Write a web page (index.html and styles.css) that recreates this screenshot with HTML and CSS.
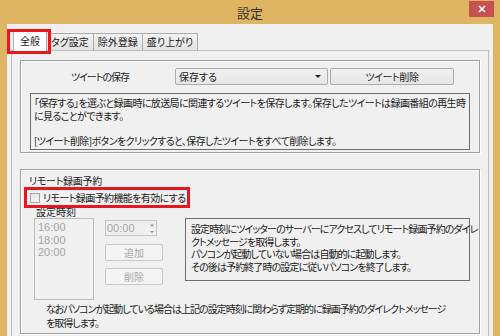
FILE: index.html
```html
<!DOCTYPE html>
<html lang="ja">
<head>
    <meta charset="UTF-8">
    <title>設定</title>
    <link rel="stylesheet" href="styles.css">
</head>
<body>
<div class="titlebar">
    <span class="title">設定</span>
    <span class="close">
        <svg width="8" height="8" viewBox="0 0 8 8"><path d="M1 1L7 7M7 1L1 7" stroke="#fff" stroke-width="1.6"/></svg>
    </span>
</div>
<div class="client">
    <nav class="tabs">
        <a href="javascript:;" class="tab active">全般<span class="mark"></span></a>
        <a href="javascript:;" class="tab">タグ設定</a>
        <a href="javascript:;" class="tab">除外登録</a>
        <a href="javascript:;" class="tab">盛り上がり</a>
    </nav>
    <div class="page">
        <div class="group save">
            <div class="row">
                <span class="lbl">ツイートの保存</span>
                <div class="combo">保存する<span class="arrow"></span></div>
                <span class="btn del">ツイート削除</span>
            </div>
            <div class="memo">
                「保存する」を選ぶと録画時に放送局に関連するツイートを保存します。保存したツイートは録画番組の再生時<br>
                に見ることができます。<br>
                <br>
                [ツイート削除]ボタンをクリックすると、保存したツイートをすべて削除します。
            </div>
        </div>
        <div class="group remote">
            <div class="cap">リモート録画予約</div>
            <label class="check"><span class="box"></span>リモート録画予約機能を有効にする<span class="mark"></span></label>
            <div class="sched">
                <div class="times">
                    <div class="sub">設定時刻</div>
                    <div class="list">
                        <div>16:00</div>
                        <div>18:00</div>
                        <div>20:00</div>
                    </div>
                </div>
                <div class="ctrls">
                    <div class="spin">00:00<span class="spinbtn"><i class="up"></i><i class="down"></i></span></div>
                    <span class="btn off add">追加</span>
                    <span class="btn off">削除</span>
                </div>
                <div class="desc">
                    設定時刻にツイッターのサーバーにアクセスしてリモート録画予約のダイレ<br>
                    クトメッセージを取得します。<br>
                    パソコンが起動していない場合は自動的に起動します。<br>
                    その後は予約終了時の設定に従いパソコンを終了します。
                </div>
            </div>
            <p class="note">
                なおパソコンが起動している場合は上記の設定時刻に関わらず定期的に録画予約のダイレクトメッセージ<br>
                を取得します。
            </p>
        </div>
    </div>
</div>
</body>
</html>
```

FILE: styles.css
```css
* {
    box-sizing: border-box;
}
html, body {
    margin: 0;
}
body {
    width: 500px;
    height: 336px;
    overflow: hidden;
    background: #dfb462;
    font: 10px/12px "Noto Sans CJK JP", sans-serif;
    font-feature-settings: "palt";
    color: #1a1a1a;
}
a {
    color: #1a1a1a;
    text-decoration: none;
}
.titlebar {
    height: 24px;
    display: grid;
    grid-template-columns: 1fr auto 1fr;
    align-items: start;
}
.title {
    grid-column: 2;
    font-size: 13px;
    line-height: 16px;
    padding-top: 5px;
    color: #333;
}
.close {
    grid-column: 3;
    justify-self: end;
    display: flex;
    align-items: center;
    justify-content: center;
    width: 25px;
    height: 16px;
    margin: 1px 6px 0 0;
    background: #c75050;
}
.client {
    height: 312px;
    margin: 0 7px;
    padding: 7px 4px 0;
    background: #f0f0f0;
}
.tabs {
    display: flex;
    align-items: flex-end;
    height: 19px;
    padding-left: 2px;
}
.tab {
    display: block;
    height: 17px;
    padding: 0 4px;
    line-height: 16px;
    white-space: nowrap;
    border: 1px solid #acacac;
    border-bottom: none;
    background: linear-gradient(#f2f2f2, #e3e3e3);
}
.tab + .tab {
    margin-left: -1px;
}
.tab.active {
    position: relative;
    z-index: 1;
    height: 20px;
    margin-bottom: -1px;
    padding: 0 6px;
    line-height: 18px;
    background: #fff;
}
.mark {
    position: absolute;
    left: -7px;
    right: -5px;
    top: -3px;
    bottom: -3px;
    border: 3px solid #e8161e;
}
.page {
    height: 300px;
    padding: 9px 8px 0;
    border: 1px solid #bdbdbd;
    background: #f0f0f0;
}
.group {
    border: 1px solid #a0a0a0;
    box-shadow: 1px 1px 0 #fff, inset 1px 1px 0 #fff;
}
.save {
    padding: 7px 9px 2px;
}
.row {
    display: flex;
    align-items: center;
    height: 17px;
}
.lbl {
    width: 140px;
    text-align: center;
    letter-spacing: -1px;
}
.combo {
    position: relative;
    width: 153px;
    height: 17px;
    margin-left: 5px;
    padding-left: 3px;
    line-height: 15px;
    border: 1px solid #acacac;
    border-radius: 2px;
    background: linear-gradient(#f2f2f2, #e5e5e5);
}
.arrow {
    position: absolute;
    right: 6px;
    top: 6px;
    border-left: 3px solid transparent;
    border-right: 3px solid transparent;
    border-top: 3px solid #222;
}
.btn {
    display: block;
    text-align: center;
    border: 1px solid #acacac;
    border-radius: 2px;
    background: linear-gradient(#f2f2f2, #e5e5e5);
}
.del {
    width: 124px;
    height: 17px;
    margin-left: 2px;
    line-height: 15px;
    letter-spacing: -0.4px;
}
.memo {
    height: 57px;
    margin-top: 8px;
    padding: 3px 3px 0;
    line-height: 12.5px;
    white-space: nowrap;
    letter-spacing: -0.6px;
    border: 1px solid #6e6e6e;
    background: #f0f0f0;
}
.remote {
    margin-top: 16px;
    padding: 5px 0 3px;
}
.cap {
    padding-left: 8px;
    letter-spacing: -0.3px;
}
.check {
    position: relative;
    display: flex;
    align-items: center;
    width: 160px;
    height: 15px;
    margin: 3px 0 0 6px;
    padding-left: 3px;
    white-space: nowrap;
    letter-spacing: -0.6px;
}
.check .mark {
    left: -3px;
    right: -3px;
}
.box {
    flex: none;
    width: 10px;
    height: 10px;
    margin-right: 3px;
    border: 1px solid #a6a6a6;
    background: linear-gradient(#e4e4e4, #f6f6f6);
}
.sched {
    display: flex;
    align-items: flex-start;
    margin-top: 1px;
    padding-left: 13px;
}
.sub {
    padding-left: 2px;
}
.list {
    width: 60px;
    height: 82px;
    padding: 2px 0 0 3px;
    font: 11px/12.5px "Liberation Sans", Arial, sans-serif;
    color: #a3a3a3;
    border: 1px solid #bcbcbc;
}
.ctrls {
    width: 58px;
    margin: 14px 0 0 11px;
}
.spin {
    position: relative;
    width: 52px;
    height: 16px;
    padding-left: 1px;
    font: 11px/14px "Liberation Sans", Arial, sans-serif;
    color: #a3a3a3;
    border: 1px solid #c4c4c4;
}
.spinbtn {
    position: absolute;
    right: 0;
    top: 0;
    bottom: 0;
    width: 8px;
    display: flex;
    flex-direction: column;
    align-items: center;
    justify-content: space-around;
}
.spinbtn i {
    border-left: 2px solid transparent;
    border-right: 2px solid transparent;
}
.up {
    border-bottom: 2px solid #8a8a8a;
}
.down {
    border-top: 2px solid #8a8a8a;
}
.btn.off {
    height: 17px;
    margin-top: 7px;
    line-height: 15px;
    color: #a6a6a6;
    border-color: #c8c8c8;
    background: #f4f4f4;
}
.btn.add {
    margin-top: 8px;
}
.desc {
    width: 285px;
    height: 63px;
    margin: 12px 0 0 22px;
    padding: 4px 0 0 5px;
    line-height: 12.5px;
    white-space: nowrap;
    letter-spacing: -0.9px;
    border: 1px solid #6e6e6e;
}
.note {
    margin: 2px 0 0;
    padding-left: 25px;
    line-height: 14px;
    white-space: nowrap;
    letter-spacing: -1px;
}
```
